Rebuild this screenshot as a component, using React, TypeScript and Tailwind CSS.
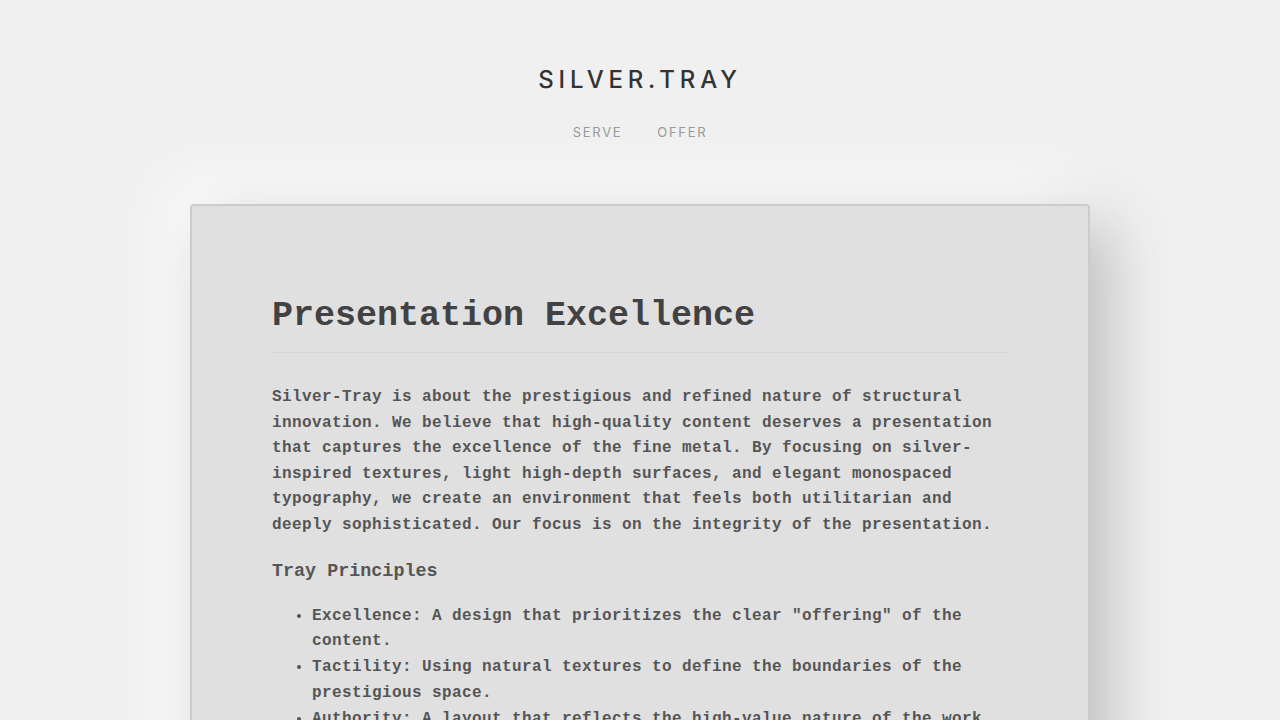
import React from 'react'

const principles = [
  ['Excellence', 'A design that prioritizes the clear "offering" of the content.'],
  ['Tactility', 'Using natural textures to define the boundaries of the prestigious space.'],
  ['Authority', 'A layout that reflects the high-value nature of the work.'],
]

export default function App() {
  return (
    <div className="min-h-screen bg-[#f0f0f0] pb-20">
      <header className="pt-[62px] text-center">
        <h1 className="text-[24px] leading-[36px] font-medium tracking-[0.2em] text-[#333] [font-family:Inter,'Noto_Sans',sans-serif]">
          SILVER.TRAY
        </h1>
        <nav className="mt-[24px] flex justify-center gap-[35px] text-[13px] leading-[20px] tracking-[0.13em] text-[#999] [font-family:Inter,'Noto_Sans',sans-serif]">
          <a href="#">SERVE</a>
          <a href="#">OFFER</a>
        </nav>
      </header>

      <main className="mx-auto mt-[62px] w-[900px] rounded-[4px] border-2 border-[#cccccc] bg-[#e0e0e0] px-[80px] pt-[89px] pb-[80px] shadow-[20px_20px_60px_#bebebe,-20px_-20px_60px_#ffffff] [font-family:'Liberation_Mono','DejaVu_Sans_Mono',monospace]">
        <h2 className="border-b border-[#d6d6d6] pb-[15px] text-[35px] leading-[42px] font-bold text-[#424242]">
          Presentation Excellence
        </h2>
        <p className="mt-[32px] text-[16px] leading-[1.6] font-bold tracking-[0.4px] text-[#555]">
          Silver-Tray is about the prestigious and refined nature of structural innovation. We believe
          that high-quality content deserves a presentation that captures the excellence of the fine
          metal. By focusing on silver-inspired textures, light high-depth surfaces, and elegant
          monospaced typography, we create an environment that feels both utilitarian and deeply
          sophisticated. Our focus is on the integrity of the presentation.
        </p>
        <h3 className="mt-[19px] text-[18.4px] leading-[27px] font-bold text-[#555]">Tray Principles</h3>
        <ul className="mt-[19px] list-disc pl-[40px] text-[16px] leading-[1.61] font-bold tracking-[0.4px] text-[#555]">
          {principles.map(([k, v]) => (
            <li key={k}>
              {k}: {v}
            </li>
          ))}
        </ul>
      </main>
    </div>
  )
}
